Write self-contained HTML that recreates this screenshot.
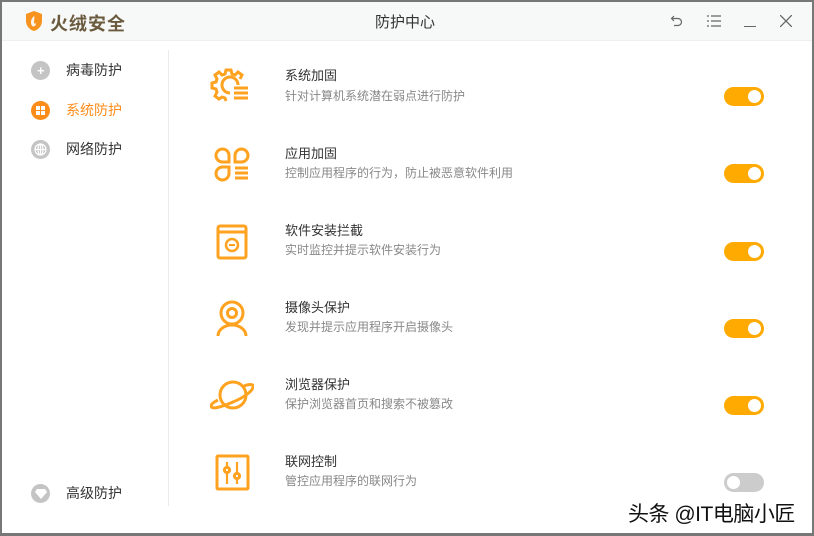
<!DOCTYPE html>
<html><head><meta charset="utf-8"><style>
*{margin:0;padding:0;box-sizing:border-box}
body{width:814px;height:536px;background:#777;font-family:"Liberation Sans","Noto Sans CJK SC",sans-serif;position:relative;overflow:hidden}
.win{position:absolute;left:2px;top:2px;width:810px;height:531px;background:#fff}
.tb{position:absolute;left:0;top:0;width:810px;height:39px;background:#f7f8f8;border-bottom:1px solid #eee}
.t{position:absolute;white-space:nowrap}
.div{position:absolute;left:166px;top:48px;width:1px;height:456px;background:#ececec}
.si{position:absolute;left:29px;width:19px;height:19px;border-radius:50%;background:#c4c4c4}
.sl{position:absolute;left:64px;font-size:14px;color:#333}
.rt{position:absolute;left:283px;font-size:13px;color:#333}
.rd{position:absolute;left:283px;font-size:12px;color:#888}
.tg{position:absolute;left:722px;width:40px;height:19px;border-radius:10px;background:#ffaa00}
.tg:after{content:"";position:absolute;right:3px;top:3px;width:13px;height:13px;border-radius:50%;background:#fff}
.tg.off{background:#ccc}.tg.off:after{right:auto;left:3px}
svg.ic{position:absolute;left:208px;width:44px;height:44px}
</style></head><body>
<div class="win">
<div class="tb">
<svg style="position:absolute;left:22px;top:8px" width="20" height="22" viewBox="0 0 20 22"><path d="M10 1L2 4v7c0 5 4 9 8 10 4-1 8-5 8-10V4z" fill="#f7931e"/><path d="M10 6c-3 3-4 6-2 10 2 1 4 0 4-3-1 1-2 1-2-1 0-2 1-4 0-6z" fill="#fff" opacity=".9"/></svg>
<div class="t" style="left:48px;top:8px;font-size:18px;font-weight:bold;color:#6b5b3e;letter-spacing:1px">火绒安全</div>
<div class="t" style="left:373px;top:9px;font-size:15px;color:#333">防护中心</div>
<svg style="position:absolute;left:668px;top:12px" width="14" height="14" viewBox="0 0 14 14" fill="none" stroke="#666" stroke-width="1.2"><path d="M4 2L1.5 4.5 4 7M1.5 4.5H8a3.5 3.5 0 0 1 0 7H4"/></svg>
<svg style="position:absolute;left:705px;top:13px" width="14" height="12" viewBox="0 0 14 12" stroke="#666" stroke-width="1.2"><path d="M0 1h2M4 1h10M0 6h2M4 6h10M0 11h2M4 11h10"/></svg>
<div style="position:absolute;left:742px;top:24px;width:12px;height:1.3px;background:#666"></div>
<svg style="position:absolute;left:778px;top:13px" width="12" height="12" viewBox="0 0 12 12" stroke="#666" stroke-width="1.3"><path d="M0 0L12 12M12 0L0 12"/></svg>
</div>
<div class="div"></div>
<div class="si" style="top:59px"></div><div class="t" style="left:35px;top:61px;color:#fff;font-size:13px;font-weight:bold">+</div>
<div class="sl t" style="top:58px">病毒防护</div>
<div class="si" style="top:99px;background:#fd8d1a"></div>
<svg style="position:absolute;left:34px;top:104px" width="9" height="9" viewBox="0 0 9 9" fill="#fff"><rect width="4" height="4"/><rect x="5" width="4" height="4"/><rect y="5" width="4" height="4"/><rect x="5" y="5" width="4" height="4"/></svg>
<div class="sl t" style="top:98px;color:#fd8d1a">系统防护</div>
<div class="si" style="top:138px"></div>
<svg style="position:absolute;left:32px;top:141px" width="13" height="13" viewBox="0 0 13 13" fill="none" stroke="#fff" stroke-width="1.2"><circle cx="6.5" cy="6.5" r="5.5"/><path d="M1 6.5h11M6.5 1v11"/><ellipse cx="6.5" cy="6.5" rx="2.5" ry="5.5"/></svg>
<div class="sl t" style="top:137px">网络防护</div>
<div class="si" style="top:482px"></div>
<svg style="position:absolute;left:33px;top:487px" width="12" height="10" viewBox="0 0 12 10" fill="#fff"><path d="M2 0h8l2 3-6 7-6-7z"/></svg>
<div class="sl t" style="top:481px">高级防护</div>

<svg class="ic" style="top:61px" viewBox="0 0 44 44" fill="none" stroke="#ffa21f" stroke-width="3"><path d="M30 16l2-4-4-3-3 3-3-1-1-4h-5l-1 4-3 1-3-3-4 3 2 4-1 3-4 1v5l4 1 1 3-2 4 4 3 3-2 3 1 1 3"/><path d="M28 22a8 8 0 1 0-8 8"/><path d="M24 25h14M24 30h14M24 35h14"/></svg>
<div class="rt t" style="top:63px">系统加固</div><div class="rd t" style="top:85px">针对计算机系统潜在弱点进行防护</div><div class="tg" style="top:85px"></div>

<svg class="ic" style="top:140px" viewBox="0 0 44 44" fill="none" stroke="#ffa21f" stroke-width="3"><path d="M19 20H13a6.5 6.5 0 1 1 6-6.5zM25 20V13.5a6.5 6.5 0 1 1 6.5 6.5zM19 25v6.5a6.5 6.5 0 1 1-6.5-6.5z"/><path d="M25 26h13M25 31h13M25 36h13"/></svg>
<div class="rt t" style="top:141px">应用加固</div><div class="rd t" style="top:162px">控制应用程序的行为，防止被恶意软件利用</div><div class="tg" style="top:162px"></div>

<svg class="ic" style="top:218px" viewBox="0 0 44 44" fill="none" stroke="#ffa21f" stroke-width="3"><rect x="8" y="6" width="28" height="32" rx="2"/><path d="M9 12h26"/><circle cx="22" cy="25" r="6" stroke-width="2.5"/><path d="M19 25h6" stroke-width="2"/></svg>
<div class="rt t" style="top:218px">软件安装拦截</div><div class="rd t" style="top:239px">实时监控并提示软件安装行为</div><div class="tg" style="top:240px"></div>

<svg class="ic" style="top:294px" viewBox="0 0 44 44" fill="none" stroke="#ffa21f" stroke-width="3"><circle cx="22" cy="17" r="11"/><circle cx="22" cy="17" r="4.5"/><path d="M8 40a14 11 0 0 1 28 0"/></svg>
<div class="rt t" style="top:295px">摄像头保护</div><div class="rd t" style="top:316px">发现并提示应用程序开启摄像头</div><div class="tg" style="top:317px"></div>

<svg class="ic" style="top:371px" viewBox="0 0 44 44" fill="none" stroke="#ffa21f" stroke-width="3"><circle cx="23" cy="22" r="13"/><path d="M34 13c5-2 9-2 9 0 1 4-8 11-20 16S2 37 1 33c0-2 3-4 7-6"/></svg>
<div class="rt t" style="top:372px">浏览器保护</div><div class="rd t" style="top:393px">保护浏览器首页和搜索不被篡改</div><div class="tg" style="top:394px"></div>

<svg class="ic" style="top:449px" viewBox="0 0 44 44" fill="none" stroke="#ffa21f" stroke-width="3"><rect x="7" y="5" width="31" height="33" rx="1"/><path d="M17 11v22M27 11v22" stroke-width="2.2"/><circle cx="17" cy="19" r="2.6" fill="#fff"/><circle cx="27" cy="25" r="2.6" fill="#fff"/></svg>
<div class="rt t" style="top:449px">联网控制</div><div class="rd t" style="top:470px">管控应用程序的联网行为</div><div class="tg off" style="top:471px"></div>

<div class="t" style="left:626px;top:496px;font-size:21px;letter-spacing:-0.5px;color:#111;text-shadow:0 0 2px #fff,0 0 2px #fff">头条 @IT电脑小匠</div>
</div>
</body></html>
